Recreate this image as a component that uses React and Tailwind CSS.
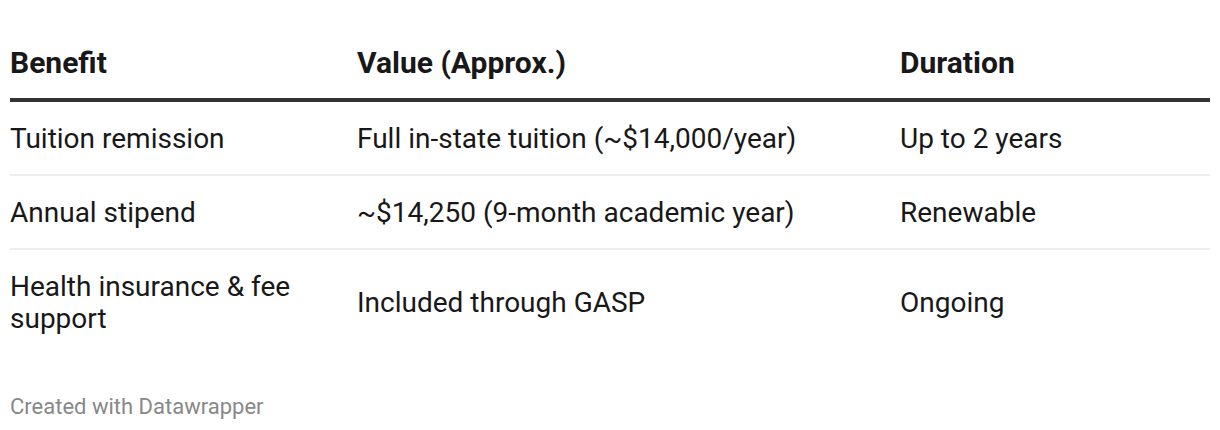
const rows = [
  ["Tuition remission", "Full in-state tuition (~$14,000/year)", "Up to 2 years"],
  ["Annual stipend", "~$14,250 (9-month academic year)", "Renewable"],
  ["Health insurance & fee support", "Included through GASP", "Ongoing"],
];

export default function App() {
  return (
    <div className="w-[1220px] h-[430px] overflow-hidden bg-white px-[10px] font-['Roboto',sans-serif] text-[#181818]">
      <table className="w-full border-collapse mt-[45px]">
        <thead>
          <tr className="border-b-[4px] border-[#333333]">
            <th className="w-[347px] text-left font-bold text-[30px] leading-[36px] pb-[17px]">Benefit</th>
            <th className="w-[543px] text-left font-bold text-[30px] leading-[36px] pb-[17px]">Value (Approx.)</th>
            <th className="text-left font-bold text-[30px] leading-[36px] pb-[17px]">Duration</th>
          </tr>
        </thead>
        <tbody>
          {rows.map((r, i) => (
            <tr key={i} className={i < rows.length - 1 ? "border-b-2 border-[#eeeeee]" : ""}>
              {r.map((c, j) => (
                <td key={j} className="align-middle text-[28px] leading-[32px] pt-[21px] pb-[19px] pr-[40px]">{c}</td>
              ))}
            </tr>
          ))}
        </tbody>
      </table>
      <p className="mt-[38px] text-[22px] leading-[30px] text-[#888888]">Created with Datawrapper</p>
    </div>
  );
}
